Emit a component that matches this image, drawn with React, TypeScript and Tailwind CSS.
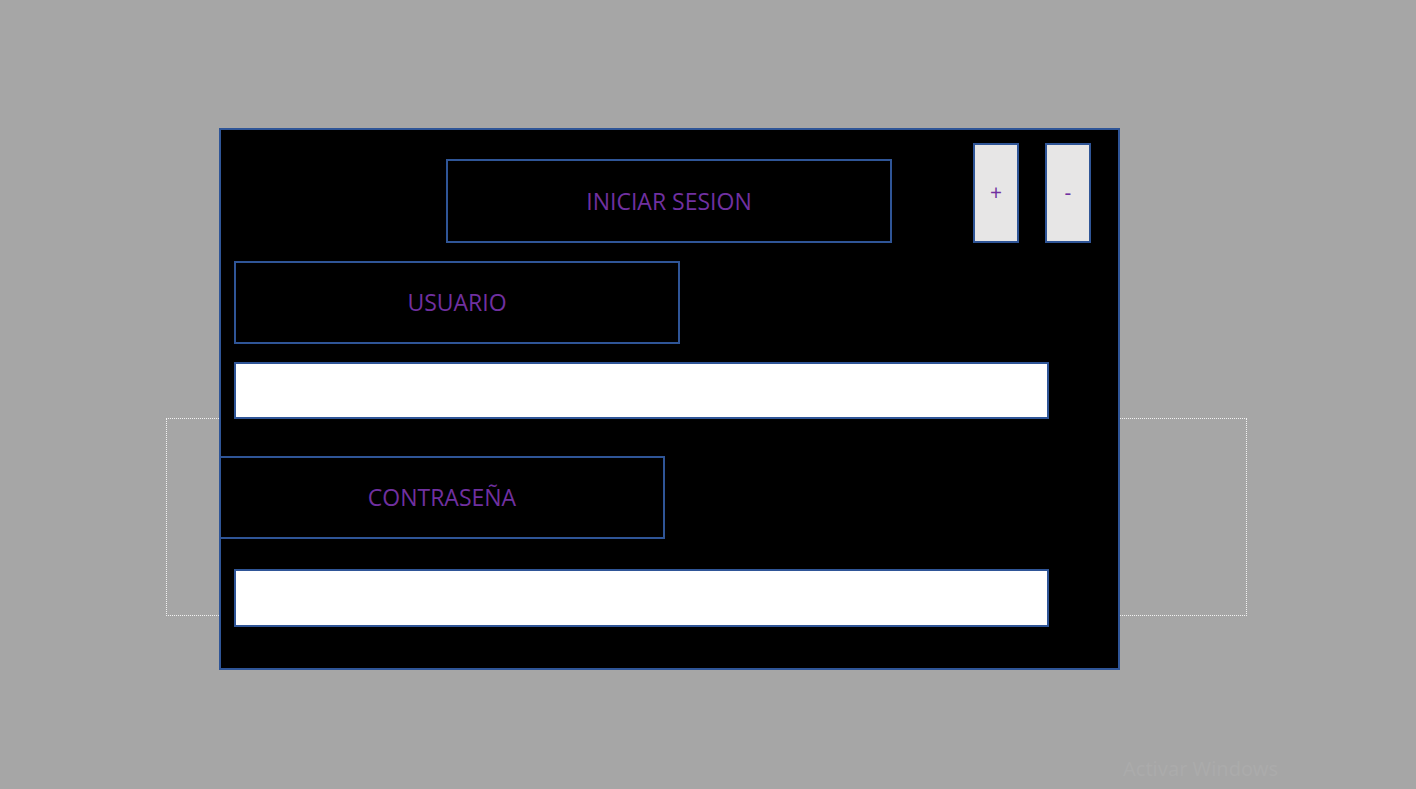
const App = () => {
  return (
    <div className="relative h-[789px] w-full overflow-hidden bg-[#a6a6a6] font-['Open_Sans',sans-serif]">
      {/* dotted frame behind the form */}
      <div className="absolute left-[166px] top-[418px] h-[198px] w-[1081px] border border-dotted border-[#f2f2f2]" />

      <div className="relative pl-[219px] pt-[128px]">
        <div className="flex h-[542px] w-[901px] flex-col border-2 border-[#2f5597] bg-black">
          <div className="mt-[13px] flex items-start">
            <div className="ml-[225px] mt-[16px] flex h-[84px] w-[446px] items-center justify-center border-2 border-[#2f5597] text-[23px] text-[#7030a0]">
              INICIAR SESION
            </div>
            <button className="ml-[81px] flex h-[100px] w-[46px] items-center justify-center border-2 border-[#2f5597] bg-[#e7e6e6] text-[21px] text-[#7030a0]">
              +
            </button>
            <button className="ml-[26px] flex h-[100px] w-[46px] items-center justify-center border-2 border-[#2f5597] bg-[#e7e6e6] text-[21px] text-[#7030a0]">
              -
            </button>
          </div>

          <div className="ml-[13px] mt-[18px] flex h-[83px] w-[446px] items-center justify-center border-2 border-[#2f5597] text-[23px] text-[#7030a0]">
            USUARIO
          </div>
          <input className="ml-[13px] mt-[18px] h-[57px] w-[815px] border-2 border-[#2f5597] bg-white outline-none" />

          <div className="-ml-[2px] mt-[37px] flex h-[83px] w-[446px] items-center justify-center border-2 border-[#2f5597] text-[23px] text-[#7030a0]">
            CONTRASEÑA
          </div>
          <input type="password" className="ml-[13px] mt-[30px] h-[58px] w-[815px] border-2 border-[#2f5597] bg-white outline-none" />
        </div>
      </div>

      {/* windows watermark */}
      <p className="absolute left-[1123px] top-[756px] font-['Noto_Sans',sans-serif] text-[20px] leading-[26px] text-[#ababab]">
        Activar Windows
      </p>
    </div>
  );
};

export default App;
